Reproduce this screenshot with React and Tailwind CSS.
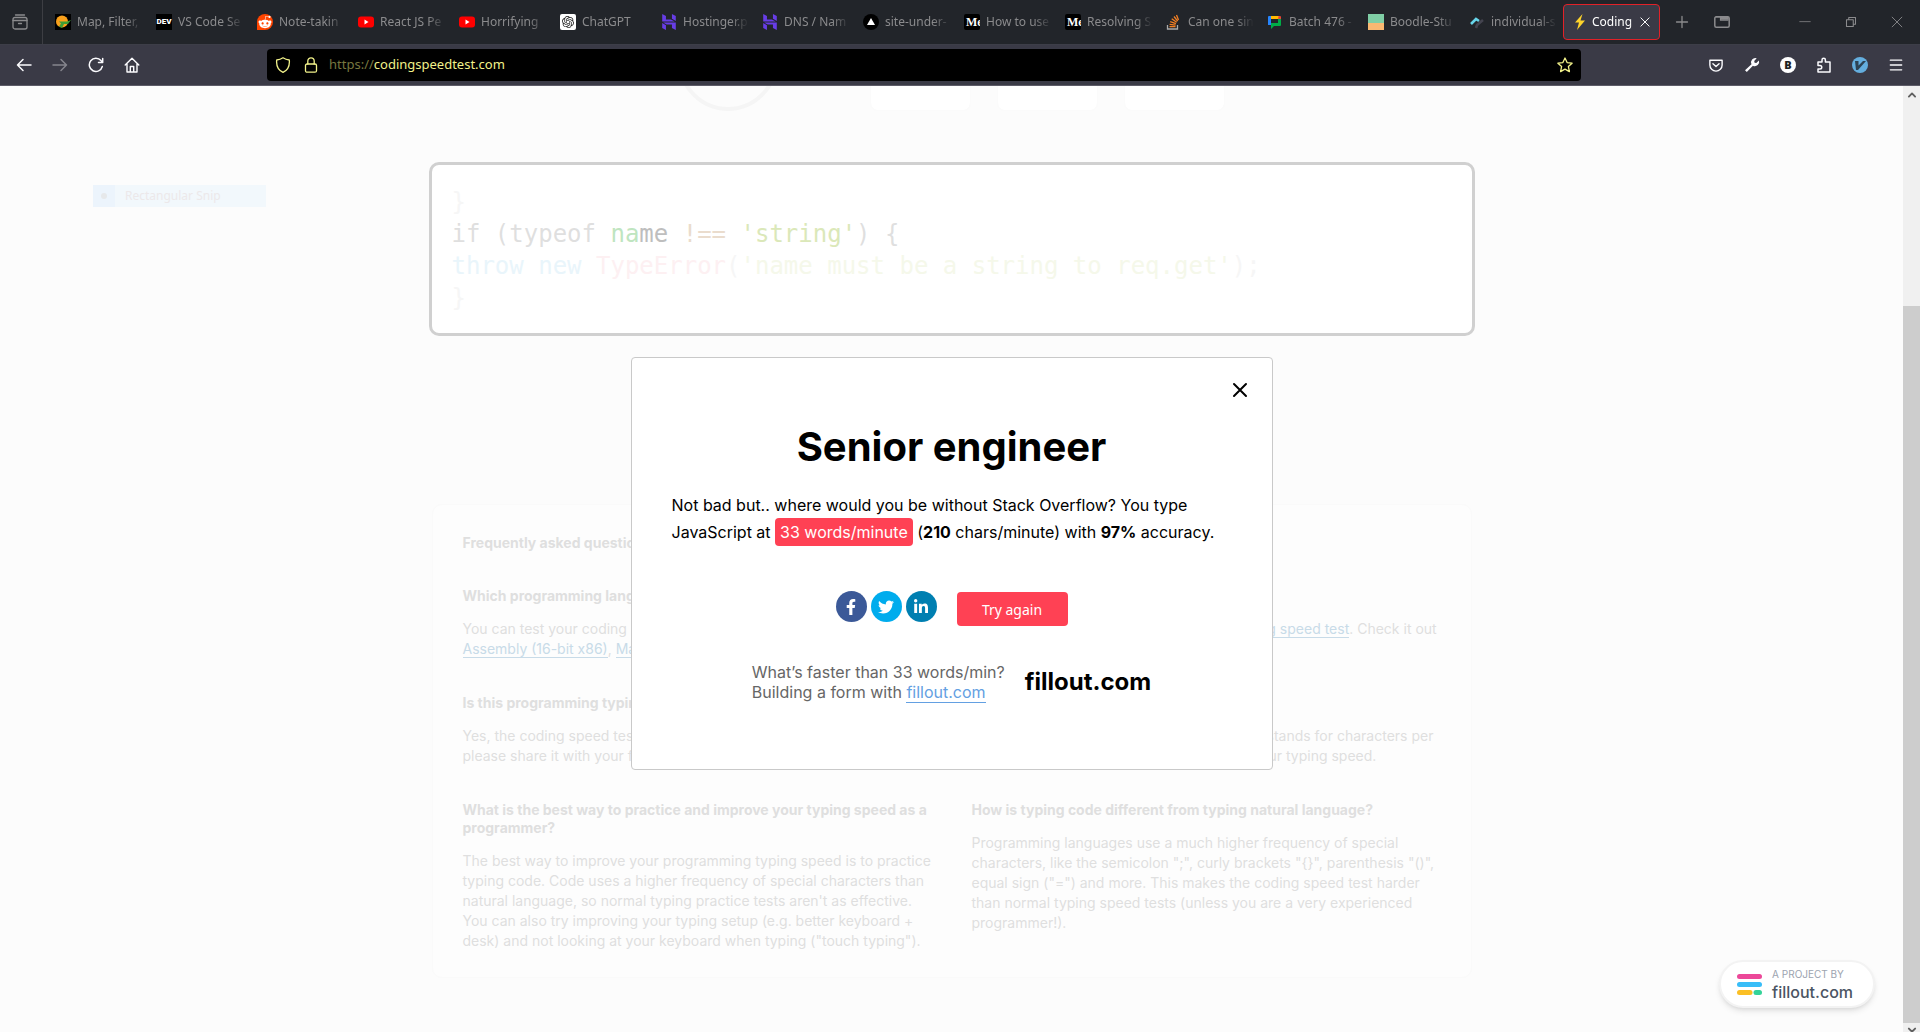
import React from "react";
import { SiOpenai, SiHostinger } from "react-icons/si";
import { FaRedditAlien, FaFacebookF, FaTwitter, FaLinkedinIn } from "react-icons/fa";

const ui = "font-['Noto_Sans','Open_Sans',sans-serif]";

function Favicon({ kind }) {
  switch (kind) {
    case "pac":
      return (
        <svg viewBox="0 0 16 16" className="size-4 shrink-0">
          <rect width="16" height="16" fill="#000" />
          <circle cx="7" cy="7.500" r="6" fill="#f9a01b" />
          <path d="M4 7.500h8l4-1.500-3 4H9l-2 4-3-1.500 2-3z" fill="#3f9c35" />
        </svg>
      );
    case "dev":
      return (
        <span className="flex size-4 shrink-0 items-center justify-center bg-black font-['Roboto',sans-serif] text-[8px] font-black text-white">
          DEV
        </span>
      );
    case "reddit":
      return (
        <span className="flex size-4 shrink-0 items-center justify-center rounded-full rounded-bl-xs bg-[#ff4500]">
          <FaRedditAlien className="size-3.5 text-white" />
        </span>
      );
    case "youtube":
      return (
        <svg viewBox="0 0 16 16" className="size-4 shrink-0">
          <rect y="2.500" width="16" height="11" rx="3" fill="#f00" />
          <path d="M6.500 5.500v5l4-2.500z" fill="#fff" />
        </svg>
      );
    case "gpt":
      return (
        <span className="flex size-4 shrink-0 items-center justify-center rounded-xs bg-white">
          <SiOpenai className="size-3 text-[#222]" />
        </span>
      );
    case "hostinger":
      return <SiHostinger className="size-4 shrink-0 text-[#673de6]" />;
    case "vercel":
      return (
        <svg viewBox="0 0 16 16" className="size-4 shrink-0">
          <circle cx="8" cy="8" r="8" fill="#000" />
          <path d="M8 4l4 7H4z" fill="#fff" />
        </svg>
      );
    case "medium":
      return (
        <span className="flex size-4 shrink-0 items-center overflow-hidden rounded-xs bg-black pl-0.5 font-['Liberation_Serif',serif] text-[12px] font-bold text-white">
          Me
        </span>
      );
    case "stack":
      return (
        <svg viewBox="0 0 16 16" className="size-4 shrink-0" fill="none" strokeWidth="1.300">
          <path d="M1.500 11v4h10v-4" stroke="#aaa" />
          <path d="M3.500 12.700h6M3.600 10.300l6 .9M4.200 7.600l5.700 2M5.700 4.800l5 3.500M8 2.500l3.700 4.700M10.500 1l2 5" stroke="#f48024" />
        </svg>
      );
    case "chat":
      return (
        <svg viewBox="0 0 16 16" className="size-4 shrink-0">
          <path d="M1 3a1 1 0 0 1 1-1h2v9H1z" fill="#2684fc" />
          <path d="M4 2h8v3H4z" fill="#ffba00" />
          <path d="M11.500 2H13a1 1 0 0 1 1 1v2.500h-3z" fill="#ea4335" />
          <path d="M11 5h3v6a1 1 0 0 1-1 1H7l-3 3V9h7z" fill="#00ac47" />
          <path d="M4 5h7v4H4z" fill="#22252a" />
        </svg>
      );
    case "boodle":
      return (
        <svg viewBox="0 0 16 16" className="size-4 shrink-0">
          <path d="M0 0h16v9H0z" fill="#7fcea5" />
          <path d="M0 9h16v7H0z" fill="#f9b872" />
        </svg>
      );
    case "strokes":
      return (
        <svg viewBox="0 0 16 16" className="size-4 shrink-0" fill="none" strokeWidth="2.600">
          <path d="M2 10l5-5 3 2" stroke="#67d5ea" />
          <path d="M7 14l1-3 6-5" stroke="#44444f" />
        </svg>
      );
    default:
      return (
        <svg viewBox="0 0 16 16" className="size-4 shrink-0">
          <path d="M10.500 0L3 8.500h4L5 16l8-9.500H8.500z" fill="#fdd32b" />
        </svg>
      );
  }
}

const tabs = [
  ["pac", "Map, Filter,"],
  ["dev", "VS Code Se"],
  ["reddit", "Note-takin"],
  ["youtube", "React JS Pe"],
  ["youtube", "Horrifying"],
  ["gpt", "ChatGPT"],
  ["hostinger", "Hostinger.p"],
  ["hostinger", "DNS / Nam"],
  ["vercel", "site-under-"],
  ["medium", "How to use"],
  ["medium", "Resolving S"],
  ["stack", "Can one sin"],
  ["chat", "Batch 476 -"],
  ["boodle", "Boodle-Stu"],
  ["strokes", "individual-s"],
];

function Icon({ children, className = "size-4", width = "1.300" }) {
  return (
    <svg
      viewBox="0 0 16 16"
      className={className}
      fill="none"
      stroke="currentColor"
      strokeWidth={width}
      strokeLinecap="round"
      strokeLinejoin="round"
    >
      {children}
    </svg>
  );
}

function BarButton({ label, className = "w-9", children }) {
  return (
    <button aria-label={label} className={`flex h-8 shrink-0 items-center justify-center ${className}`}>
      {children}
    </button>
  );
}

function TabStrip() {
  return (
    <div className="flex h-11 items-center bg-[#22252a] text-[#8b8b8d]">
      <button aria-label="Recent browsing" className="mr-3 flex h-full w-[43px] shrink-0 items-center justify-center border-r border-[#3d3e43] pr-0.5">
        <Icon className="size-4">
          <path d="M3.500 1h9" />
          <rect x="1" y="3.500" width="14" height="11.500" rx="2" />
          <path d="M1 6.500h14M6.500 9.500h3" />
        </Icon>
      </button>
      {tabs.map(([kind, title]) => (
        <button key={title} className="flex h-9 w-[101px] shrink-0 items-center gap-1.5 text-xs">
          <Favicon kind={kind} />
          <span className="w-[72px] text-left whitespace-nowrap [mask-image:linear-gradient(to_right,#000_48px,transparent_66px)]">
            {title}
          </span>
        </button>
      ))}
      <div className="-ml-[7px] flex h-9 w-[97px] shrink-0 items-center rounded border border-[#e22128] bg-[#3a3a46] pl-2 text-xs text-white">
        <Favicon kind="bolt" />
        <span className="ml-1 w-[46px] whitespace-nowrap [mask-image:linear-gradient(to_right,#000_38px,transparent)]">
          Coding
        </span>
        <button aria-label="Close tab" className="ml-px">
          <Icon className="size-3">
            <path d="M2.500 2.500l11 11M13.500 2.500l-11 11" />
          </Icon>
        </button>
      </div>
      <BarButton label="New tab" className="ml-1 w-9">
        <Icon className="size-4" width="1.300">
          <path d="M8 2.500v11M2.500 8h11" />
        </Icon>
      </BarButton>
      <BarButton label="All tabs" className="w-11">
        <svg viewBox="0 0 16 16" className="size-4" fill="none" stroke="currentColor">
          <rect x="0.800" y="2.800" width="14.400" height="10.400" rx="1.500" strokeWidth="1.500" />
          <path d="M1.500 3h5v3.200h8" strokeWidth="1.200" />
          <path d="M7 3h7.500v2.500H7z" fill="currentColor" strokeWidth="0.500" />
        </svg>
      </BarButton>
      <div className="ml-auto flex">
        <BarButton label="Minimize" className="w-[46px]">
          <Icon className="size-3" width="1">
            <path d="M1 7.500h14" />
          </Icon>
        </BarButton>
        <BarButton label="Restore" className="w-[46px]">
          <Icon className="size-3" width="1.400">
            <path d="M2 5h9v9H2zM5 5V2h9v9h-3" />
          </Icon>
        </BarButton>
        <BarButton label="Close window" className="w-[46px]">
          <Icon className="size-3" width="1.200">
            <path d="M1.500 1.500l13 13M14.500 1.500l-13 13" />
          </Icon>
        </BarButton>
      </div>
    </div>
  );
}

function NavBar() {
  return (
    <div className="flex items-center border-t border-b border-t-[#3d3e48] border-b-[#5d5c68] bg-[#3a3a46] px-1.5 py-1 text-[#fbfbfe]">
      <BarButton label="Back">
        <Icon width="1.500">
          <path d="M15 8H1.500M7 2.500L1.500 8 7 13.500" />
        </Icon>
      </BarButton>
      <BarButton label="Forward">
        <Icon className="size-4 text-[#85858d]" width="1.500">
          <path d="M1 8h13.500M9 2.500L14.500 8 9 13.500" />
        </Icon>
      </BarButton>
      <BarButton label="Reload">
        <Icon width="1.500">
          <path d="M14.300 9.500A6.600 6.600 0 1 1 13 3.600l1.500 1.600M14.700 1.500v4h-4.200" />
        </Icon>
      </BarButton>
      <BarButton label="Home">
        <Icon width="1.400">
          <path d="M1.200 8L8 1.200 14.800 8M3 6.800V15h10V6.800M6.300 15V9.500h3.400V15" />
        </Icon>
      </BarButton>
      <label className="mr-[117px] ml-[117px] flex h-8 flex-1 items-center rounded bg-black px-2 text-[13px] text-[#f2f28a]">
        <Icon className="size-4 shrink-0">
          <path d="M8 .8c2 1.400 4 2 6.300 2.200.5 5-1.300 10-6.300 12.300C3 13 1.200 8 1.700 3 4 2.800 6 2.200 8 .8z" />
        </Icon>
        <Icon className="ml-3 size-4 shrink-0">
          <rect x="2.500" y="7" width="11" height="8.200" rx="1.500" />
          <path d="M4.800 7V4a3.200 3.200 0 0 1 6.400 0v3" />
        </Icon>
        <span className="ml-2.5 text-[#77773f]">https://</span>
        <input aria-label="Address" defaultValue="codingspeedtest.com" className="min-w-0 flex-1 bg-transparent outline-none" />
        <button aria-label="Bookmark this page" className="shrink-0">
          <Icon>
            <path d="M8 1l2.100 4.600 5 .6-3.700 3.400 1 5L8 12.100l-4.400 2.500 1-5L.9 6.200l5-.6z" />
          </Icon>
        </button>
      </label>
      <BarButton label="Save to Pocket">
        <Icon className="size-3.5" width="1.600">
          <path d="M1 2.500h14V8a7 7 0 0 1-14 0zM4.500 6.500L8 9.800l3.500-3.300" />
        </Icon>
      </BarButton>
      <BarButton label="Developer tools">
        <svg viewBox="0 0 16 16" className="size-4" fill="currentColor">
          <path d="M1 13.200l6.500-6A4.300 4.300 0 0 1 12.700 1.200L10.200 4l.4 1.700 1.700.3 2.600-2.600a4.300 4.300 0 0 1-6 5.300L2.800 15z" />
        </svg>
      </BarButton>
      <BarButton label="Account">
        <span className="flex size-4 items-center justify-center rounded-full bg-white text-[11px] font-black text-[#222]">B</span>
      </BarButton>
      <BarButton label="Extensions">
        <Icon width="1.500">
          <path d="M2 5h4V3a1.700 1.700 0 0 1 3.400 0v2H14v10H2v-3h2a1.700 1.700 0 0 0 0-3.500H2z" />
        </Icon>
      </BarButton>
      <BarButton label="Vim keys">
        <svg viewBox="0 0 16 16" className="size-4">
          <circle cx="8" cy="8" r="8" fill="#64aede" />
          <path d="M3 4h3.500v4.500L11 4h3L6 13H4z" fill="#2d4354" />
        </svg>
      </BarButton>
      <BarButton label="Menu">
        <Icon className="size-3.5" width="1.500">
          <path d="M1.500 2.500h13M1.500 8h13M1.500 13.500h13" />
        </Icon>
      </BarButton>
    </div>
  );
}

function CodeBox() {
  return (
    <pre className="w-full max-w-[1046px] rounded-[10px] border-3 border-[#d0d0d0] bg-white px-5 pt-[21px] pb-[19px] font-['DejaVu_Sans_Mono',monospace] text-[24px] leading-8 text-[#f6f6f6]">
      <div>{"}"}</div>
      <div className="text-[#dfdfdf]">
        {"if (typeof "}
        <span className="text-[#bfe5c0]">na</span>
        <span className="text-[#bebebe]">me</span>
        <span className="text-[#eadccd]"> !== </span>
        <span className="text-[#dbe8b9]">'string'</span>
        {") {"}
      </div>
      <div>
        <span className="text-[#e9f5fb]">{"throw new "}</span>
        <span className="text-[#fdf0f2]">TypeError</span>
        {"("}
        <span className="text-[#f5f8ea]">'name must be a string to req.get'</span>
        {");"}
      </div>
      <div>{"}"}</div>
    </pre>
  );
}

function FaqItem({ title, children }) {
  return (
    <section>
      <h3 className="leading-[18px] font-bold">{title}</h3>
      <p className="mt-3.5 leading-5">{children}</p>
    </section>
  );
}

function FaqLink({ children }) {
  return (
    <a href="#test" className="border-b border-[#c8dbe8] text-[#c8dbe8]">
      {children}
    </a>
  );
}

function Faq() {
  return (
    <div className="w-full max-w-[1040px] rounded-[10px] border border-[#fafafa] bg-[#fdfdfd] px-[30px] pt-[29px] pb-[26px] text-[14px] text-[#dfdfdf]">
      <h2 className="leading-[18px] font-bold">Frequently asked questions</h2>
      <div className="mt-[35px] grid grid-cols-2 gap-x-10 gap-y-[35px]">
        <FaqItem title="Which programming languages can I test?">
          You can test your coding speed in JavaScript, Java,
          <br />
          <FaqLink>Assembly (16-bit x86)</FaqLink>, <FaqLink>MatLab</FaqLink> and more.
        </FaqItem>
        <FaqItem title="Is there a typing test too?">
          Yes, we also built one for plain text, the <FaqLink>typing speed test</FaqLink>. Check it out
        </FaqItem>
        <FaqItem title="Is this programming typing test free?">
          Yes, the coding speed test is free to use. If you like it,
          <br />
          please share it with your friends.
        </FaqItem>
        <FaqItem title="What does CPM stand for?">
          It is a measure of how quickly you type, and stands for characters per
          <br />
          minute. A higher number is good news for your typing speed.
        </FaqItem>
        <FaqItem title="What is the best way to practice and improve your typing speed as a programmer?">
          The best way to improve your programming typing speed is to practice typing code. Code uses a higher frequency
          of special characters than natural language, so normal typing practice tests aren't as effective. You can also
          try improving your typing setup (e.g. better keyboard + desk) and not looking at your keyboard when typing
          ("touch typing").
        </FaqItem>
        <FaqItem title="How is typing code different from typing natural language?">
          Programming languages use a much higher frequency of special characters, like the semicolon ";", curly
          brackets "{"{}"}", parenthesis "()", equal sign ("=") and more. This makes the coding speed test harder than
          normal typing speed tests (unless you are a very experienced programmer!).
        </FaqItem>
      </div>
    </div>
  );
}

function ResultDialog() {
  return (
    <div role="dialog" aria-label="Result" className="relative w-[642px] rounded border border-[#c9c9c9] bg-white px-10 pt-[59px] pb-[67px] text-black">
      <button aria-label="Close" className="absolute top-6 right-6">
        <Icon className="size-4" width="2">
          <path d="M2 2l12 12M14 2L2 14" />
        </Icon>
      </button>
      <h1 className="text-center text-[40px] leading-[60px] font-bold">Senior engineer</h1>
      <p className="mt-[15px] text-[16px] leading-[27px]">
        Not bad but.. where would you be without Stack Overflow? You type JavaScript at{" "}
        <span className="rounded bg-[#ff4154] px-[5px] py-1 text-white">33 words/minute</span> (<b>210</b> chars/minute)
        with <b>97%</b> accuracy.
      </p>
      <div className="mt-[45px] flex justify-center gap-1">
        <button aria-label="Share on Facebook" className="flex size-[31px] items-center justify-center rounded-full bg-[#3b5998] text-white">
          <FaFacebookF className="size-4" />
        </button>
        <button aria-label="Share on Twitter" className="flex size-[31px] items-center justify-center rounded-full bg-[#00aced] text-white">
          <FaTwitter className="size-4" />
        </button>
        <button aria-label="Share on LinkedIn" className="flex size-[31px] items-center justify-center rounded-full bg-[#007fb1] text-white">
          <FaLinkedinIn className="size-4" />
        </button>
        <button className={`${ui} mt-px ml-4 h-[34px] w-[111px] rounded bg-[#ff4154] text-[14px] text-white`}>
          Try again
        </button>
      </div>
      <div className="mt-9 flex items-center justify-center gap-5">
        <p className="text-[16px] leading-5 text-[#666]">
          What’s faster than 33 words/min?
          <br />
          Building a form with{" "}
          <a href="#fillout" className="border-b border-[#63a0e2] text-[#63a0e2]">
            fillout.com
          </a>
        </p>
        <a href="#fillout" className="text-[24px] leading-8 font-bold">
          fillout.com
        </a>
      </div>
    </div>
  );
}

function Badge() {
  return (
    <a href="#fillout" className="absolute right-7 bottom-6 flex items-center gap-2.5 rounded-full border-2 border-[#f3f3f3] bg-white py-1 pr-5 pl-4 shadow-md">
      <svg viewBox="0 0 25 21" className="h-[21px] w-[25px]">
        <rect width="25" height="5" rx="2.500" fill="#ec4899" />
        <rect y="8" width="25" height="5" rx="2.500" fill="#38bdf8" />
        <rect y="16" width="15.500" height="5" rx="2.500" fill="#fbbf24" />
        <rect x="16.500" y="16" width="8.500" height="5" rx="2.500" fill="#34d399" />
      </svg>
      <span>
        <span className="block text-[10px] leading-4 text-[#9ca3af]">A PROJECT BY</span>
        <span className="block text-[16px] leading-5 font-medium text-[#4b5563]">fillout.com</span>
      </span>
    </a>
  );
}

function ScrollBar() {
  return (
    <div className="flex w-[17px] shrink-0 flex-col bg-[#f0f0f0] text-[#606060]">
      <button aria-label="Scroll up" className="flex h-[17px] items-center justify-center">
        <Icon className="size-2.5" width="3">
          <path d="M3 10.500l5-5 5 5" />
        </Icon>
      </button>
      <div className="flex-[203]" />
      <div className="flex-[717] bg-[#cdcdcd]" />
      <button aria-label="Scroll down" className="flex h-[9px] items-end justify-center overflow-hidden">
        <Icon className="size-2.5" width="3">
          <path d="M3 10.500l5 5 5-5" />
        </Icon>
      </button>
    </div>
  );
}

export default function App() {
  return (
    <div className="flex min-h-screen flex-col">
      <header className={ui}>
        <TabStrip />
        <NavBar />
      </header>
      <div className="flex flex-1">
        <main className="relative flex flex-1 flex-col items-center overflow-hidden bg-[#fcfcfc] pb-12 font-['Inter',sans-serif]">
          <div className="flex h-[25px] items-end gap-[26px] overflow-hidden">
            <div className="mr-[66px] size-[100px] rounded-full border-4 border-[#f5f5f5]" />
            <div className="h-24 w-[101px] rounded-lg border border-[#fbfbfb] bg-white" />
            <div className="h-24 w-[101px] rounded-lg border border-[#fbfbfb] bg-white" />
            <div className="h-24 w-[101px] rounded-lg border border-[#fbfbfb] bg-white" />
          </div>
          <div className="mt-[51px] mb-[168px] flex w-full justify-center">
            <CodeBox />
          </div>
          <Faq />
          <div className={`${ui} absolute top-[99px] left-[93px] flex h-[22px] w-[173px] items-center bg-[#f2f8fc] text-xs text-[#ece8ea]`}>
            <span className="flex h-full w-[22px] items-center justify-center bg-[#ecf4fc]">
              <span className="size-1.5 rounded-full bg-[#e6e8ea]" />
            </span>
            <span className="ml-2.5">Rectangular Snip</span>
          </div>
          <div className="absolute inset-0 flex items-start justify-center pt-[271px]">
            <ResultDialog />
          </div>
          <Badge />
        </main>
        <ScrollBar />
      </div>
    </div>
  );
}
